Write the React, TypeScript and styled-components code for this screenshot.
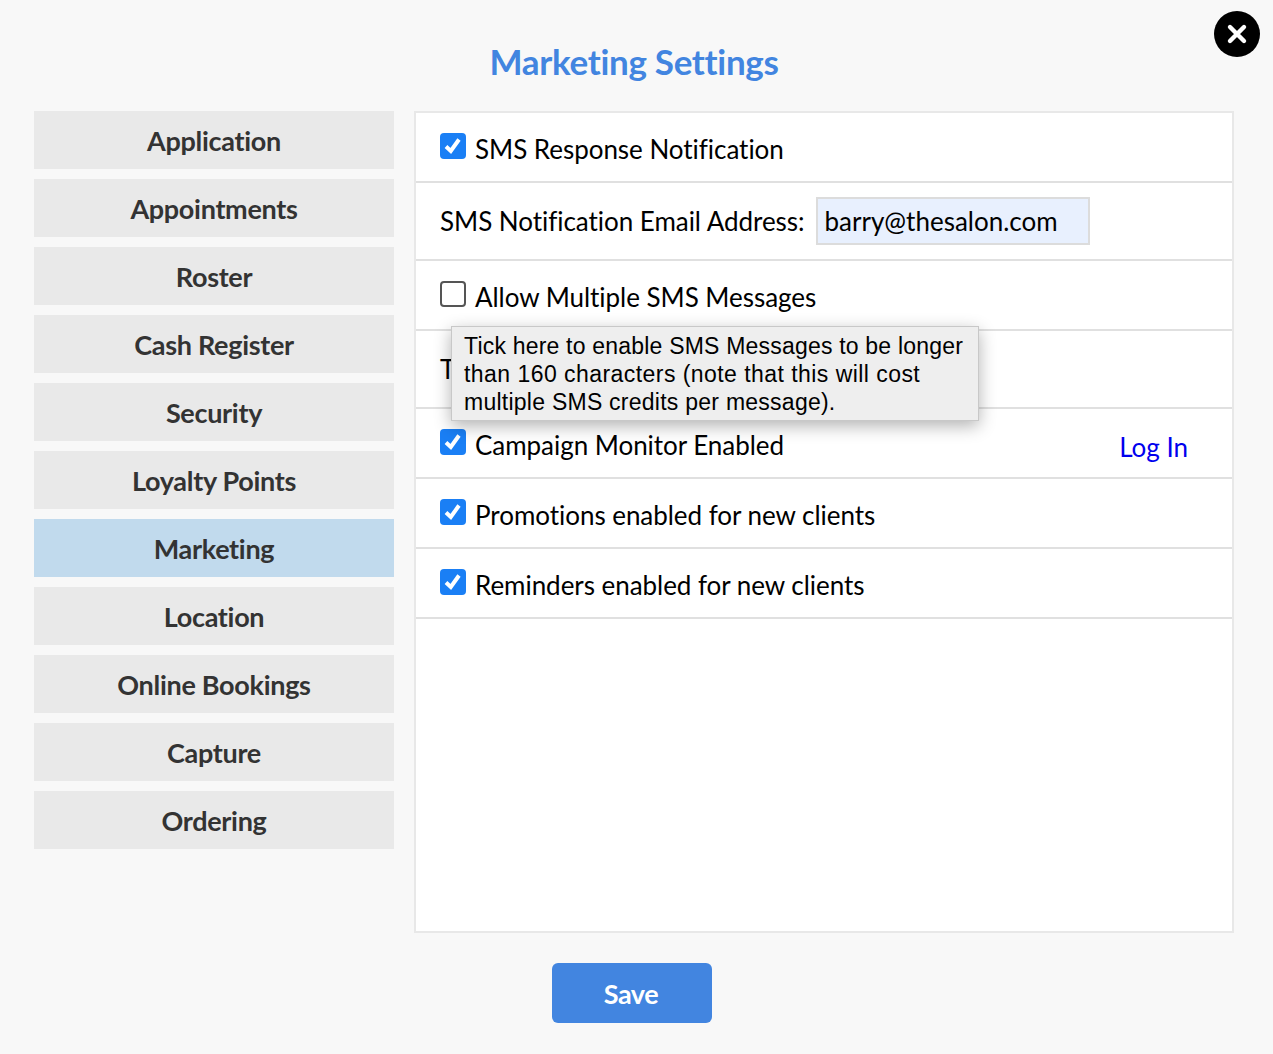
import React from "react";
import styled, { createGlobalStyle } from "styled-components";

const Global = createGlobalStyle`
  html, body { margin: 0; padding: 0; background: #f8f8f8; }
  body { font-family: Lato, "Liberation Sans", sans-serif; color: #000; }
  * { box-sizing: border-box; }
`;

const Page = styled.div`
  position: relative;
  width: 1273px;
  height: 1054px;
  padding: 0 39px 0 34px;
  background: #f8f8f8;
  overflow: hidden;
`;

const Close = styled.button`
  position: absolute;
  top: 11px;
  left: 1214px;
  width: 46px;
  height: 46px;
  border: 0;
  padding: 0;
  border-radius: 50%;
  background: #000;
  display: flex;
  align-items: center;
  justify-content: center;
`;

const Title = styled.h1`
  margin: 0;
  height: 111px;
  padding: 40px 0 0 0;
  text-align: center;
  font-size: 35px;
  line-height: 42px;
  font-weight: 700;
  letter-spacing: -0.3px;
  color: #4285e0;
`;

const Columns = styled.div`
  display: flex;
  gap: 20px;
  align-items: flex-start;
`;

const Nav = styled.nav`
  width: 360px;
  display: flex;
  flex-direction: column;
  gap: 10px;
`;

const NavItem = styled.div<{ $active?: boolean }>`
  height: 58px;
  display: flex;
  align-items: center;
  justify-content: center;
  background: ${(p) => (p.$active ? "#c1daed" : "#e9e9e9")};
  color: #333;
  font-size: 27px;
  font-weight: 700;
  letter-spacing: -0.3px;
`;

const Panel = styled.div`
  position: relative;
  width: 820px;
  height: 822px;
  background: #fff;
  border: 2px solid #e8e8e8;
`;

const Row = styled.div<{ $h: number }>`
  height: ${(p) => p.$h}px;
  padding: 0 44px 0 24px;
  border-bottom: 2px solid #e0e0e0;
  display: flex;
  align-items: center;
  font-size: 26px;
  line-height: 36px;
`;

const Box = styled.span<{ $checked?: boolean }>`
  flex: none;
  width: 26px;
  height: 26px;
  margin: -2px 9px 0 0;
  border-radius: 4px;
  display: flex;
  align-items: center;
  justify-content: center;
  background: ${(p) => (p.$checked ? "#1a7ff5" : "#fff")};
  border: ${(p) => (p.$checked ? "0" : "2px solid #555")};
`;

const Label = styled.span`
  letter-spacing: -0.04px;
`;

const CheckLabel = styled(Label)`
  margin-top: 4px;
`;

const EmailInput = styled.div`
  width: 274px;
  height: 48px;
  margin-left: 11px;
  padding-left: 7px;
  display: flex;
  align-items: center;
  background: #e8f0fe;
  border: 2px solid #dcdcdc;
`;

const LogIn = styled.a`
  margin-left: auto;
  margin-top: 8px;
  color: #0000ee;
`;

const Tooltip = styled.div`
  position: absolute;
  left: 35px;
  top: 213px;
  width: 528px;
  height: 95px;
  padding: 5px 12px;
  background: #eeeeee;
  border: 1px solid #c8c8c8;
  box-shadow: 0 5px 16px rgba(0, 0, 0, 0.3);
  font-family: "Liberation Sans", Arial, sans-serif;
  font-size: 23px;
  line-height: 28px;
  white-space: nowrap;
`;

const TipLine = styled.div<{ $spacing: number }>`
  letter-spacing: ${(p) => p.$spacing}px;
`;

const Footer = styled.div`
  display: flex;
  padding: 30px 0 0 518px;
`;

const Save = styled.button`
  width: 160px;
  height: 60px;
  border: 0;
  border-radius: 6px;
  padding: 0 2px 0 0;
  background: #4285e0;
  color: #fff;
  font-family: Lato, "Liberation Sans", sans-serif;
  font-size: 27px;
  font-weight: 700;
  letter-spacing: -0.5px;
`;

const Check = () => (
  <svg width="20" height="20" viewBox="0 0 20 20" fill="none">
    <path d="M3 10.5 L7.8 15 L16 3.5" stroke="#fff" strokeWidth="4" />
  </svg>
);

const items = ["Application", "Appointments", "Roster", "Cash Register", "Security", "Loyalty Points", "Marketing", "Location", "Online Bookings", "Capture", "Ordering"];

const CheckRow = ({ h, checked, label, children }: { h: number; checked: boolean; label: string; children?: React.ReactNode }) => (
  <Row $h={h}>
    <Box $checked={checked}>{checked && <Check />}</Box>
    <CheckLabel>{label}</CheckLabel>
    {children}
  </Row>
);

export default function App() {
  return (
    <Page>
      <Global />
      <Close aria-label="Close">
        <svg width="22" height="22" viewBox="0 0 22 22">
          <path d="M4 4 L18 18 M18 4 L4 18" stroke="#fff" strokeWidth="4.4" strokeLinecap="round" />
        </svg>
      </Close>
      <Title>Marketing Settings</Title>
      <Columns>
        <Nav>
          {items.map((i) => (
            <NavItem key={i} $active={i === "Marketing"}>{i}</NavItem>
          ))}
        </Nav>
        <Panel>
          <CheckRow h={70} checked label="SMS Response Notification" />
          <Row $h={78}>
            <Label>SMS Notification Email Address:</Label>
            <EmailInput>barry@thesalon.com</EmailInput>
          </Row>
          <CheckRow h={70} checked={false} label="Allow Multiple SMS Messages" />
          <Row $h={78}><Label>T</Label></Row>
          <CheckRow h={70} checked label="Campaign Monitor Enabled">
            <LogIn>Log In</LogIn>
          </CheckRow>
          <CheckRow h={70} checked label="Promotions enabled for new clients" />
          <CheckRow h={70} checked label="Reminders enabled for new clients" />
          <Tooltip>
            <TipLine $spacing={0.2}>Tick here to enable SMS Messages to be longer</TipLine>
            <TipLine $spacing={0.45}>than 160 characters (note that this will cost</TipLine>
            <TipLine $spacing={0.25}>multiple SMS credits per message).</TipLine>
          </Tooltip>
        </Panel>
      </Columns>
      <Footer>
        <Save>Save</Save>
      </Footer>
    </Page>
  );
}
